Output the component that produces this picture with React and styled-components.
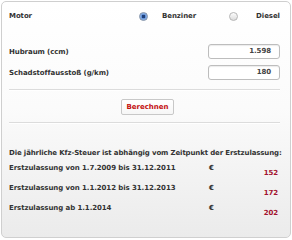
import { Fragment } from "react";
import styled, { createGlobalStyle } from "styled-components";

const Global = createGlobalStyle`
  body {
    margin: 0;
    background: #fff;
    font-family: "DejaVu Sans", Verdana, sans-serif;
  }
`;

const Card = styled.div`
  margin: 1px 0 0 1px;
  width: 290px;
  height: 237px;
  box-sizing: border-box;
  border: 1px solid #cfcfcf;
  border-radius: 5px;
  background: linear-gradient(#ffffff 0%, #fbfbfb 45%, #ebebeb 100%);
  padding: 8px 6px 0 7px;
  font-size: 7px;
  font-weight: bold;
  letter-spacing: -0.08px;
  color: #333;
`;

const MotorRow = styled.div`
  display: flex;
  align-items: center;
  height: 12px;
`;

const Label = styled.div`
  flex: ${(p) => (p.$w ? "none" : 1)};
  width: ${(p) => (p.$w ? `${p.$w}px` : "auto")};
`;

const Radio = styled.span`
  display: inline-block;
  box-sizing: border-box;
  width: 9px;
  height: 9px;
  border-radius: 50%;
  border: 1px solid ${(p) => (p.$on ? "#7c8ea6" : "#b5b5b5")};
  background: ${(p) =>
    p.$on
      ? "radial-gradient(circle, #1d3f7a 0 1.5px, #5f8fd6 2px, #a9c6ee 4px)"
      : "linear-gradient(#fdfdfd, #dcdcdc)"};
  margin-left: ${(p) => p.$ml}px;
  margin-right: ${(p) => p.$mr}px;
`;

const FieldRow = styled.div`
  display: flex;
  align-items: center;
  justify-content: space-between;
  margin-top: ${(p) => p.$mt}px;
  padding-right: 4px;
`;

const Box = styled.div`
  box-sizing: border-box;
  width: 72px;
  height: 15px;
  border: 1px solid #bdbdbd;
  border-radius: 3px;
  background: #fff;
  box-shadow: inset 0 1px 1px rgba(0, 0, 0, 0.08);
  text-align: right;
  padding-right: 8px;
  line-height: 13px;
  color: #444;
`;

const Rule = styled.hr`
  border: 0;
  border-top: 1px solid #dcdcdc;
  border-bottom: 1px solid #fff;
  margin: ${(p) => p.$mt}px 4px 0 0;
`;

const ButtonWrap = styled.div`
  display: flex;
  justify-content: center;
  margin-top: 8px;
`;

const Button = styled.button`
  font: inherit;
  color: #c40f0f;
  background: linear-gradient(#fff, #f6f6f6);
  border: 1px solid #c8c8c8;
  border-radius: 2px;
  height: 16px;
  width: 53px;
  padding: 0;
  margin-left: 2px;
  cursor: pointer;
`;

const Intro = styled.div`
  margin-top: 24px;
  height: 10px;
  line-height: 10px;
  white-space: nowrap;
  letter-spacing: -0.13px;
`;

const Table = styled.div`
  display: grid;
  grid-template-columns: 200px 1fr auto;
  grid-auto-rows: 20px;
  margin-top: 5px;
`;

const Cell = styled.div`
  line-height: 10px;
  padding-top: ${(p) => (p.$value ? 5 : 0)}px;
  padding-right: ${(p) => (p.$value ? 6 : 0)}px;
  color: ${(p) => (p.$value ? "#a3122f" : "#333")};
  text-align: ${(p) => (p.$value ? "right" : "left")};
  white-space: nowrap;
`;

const rows = [
  ["Erstzulassung von 1.7.2009 bis 31.12.2011", "152"],
  ["Erstzulassung von 1.1.2012 bis 31.12.2013", "172"],
  ["Erstzulassung ab 1.1.2014", "202"],
];

export default function App() {
  return (
    <>
      <Global />
      <Card>
        <MotorRow>
          <Label $w={130}>Motor</Label>
          <Radio $on $ml={0} $mr={14} />
          <span>Benziner</span>
          <Radio $ml={33} $mr={18} />
          <span>Diesel</span>
        </MotorRow>
        <FieldRow $mt={22}>
          <Label>Hubraum (ccm)</Label>
          <Box>1.598</Box>
        </FieldRow>
        <FieldRow $mt={6}>
          <Label>Schadstoffausstoß (g/km)</Label>
          <Box>180</Box>
        </FieldRow>
        <Rule $mt={9} />
        <ButtonWrap>
          <Button>Berechnen</Button>
        </ButtonWrap>
        <Rule $mt={7} />
        <Intro>Die jährliche Kfz-Steuer ist abhängig vom Zeitpunkt der Erstzulassung:</Intro>
        <Table>
          {rows.map(([label, value]) => (
            <Fragment key={label}>
              <Cell>{label}</Cell>
              <Cell>€</Cell>
              <Cell $value>{value}</Cell>
            </Fragment>
          ))}
        </Table>
      </Card>
    </>
  );
}
